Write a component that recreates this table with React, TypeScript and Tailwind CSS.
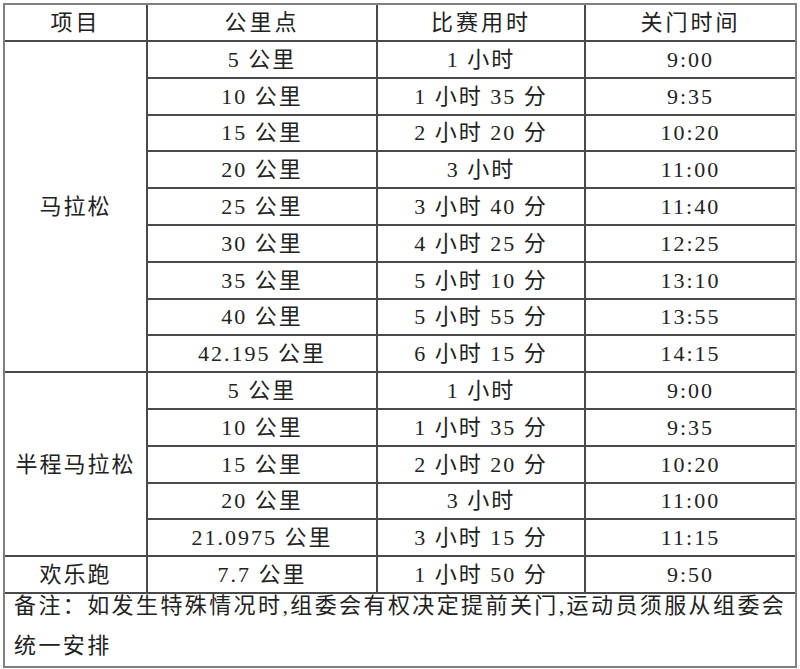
const marathon = [
  ["5 公里", "1 小时", "9:00"],
  ["10 公里", "1 小时 35 分", "9:35"],
  ["15 公里", "2 小时 20 分", "10:20"],
  ["20 公里", "3 小时", "11:00"],
  ["25 公里", "3 小时 40 分", "11:40"],
  ["30 公里", "4 小时 25 分", "12:25"],
  ["35 公里", "5 小时 10 分", "13:10"],
  ["40 公里", "5 小时 55 分", "13:55"],
  ["42.195 公里", "6 小时 15 分", "14:15"],
];

const half = [
  ["5 公里", "1 小时", "9:00"],
  ["10 公里", "1 小时 35 分", "9:35"],
  ["15 公里", "2 小时 20 分", "10:20"],
  ["20 公里", "3 小时", "11:00"],
  ["21.0975 公里", "3 小时 15 分", "11:15"],
];

const cell = "h-[36.8px] p-0 text-center align-middle border-b-2 border-r-2 border-[#4a4a4a]";
const last = "h-[36.8px] p-0 text-center align-middle border-b-2 border-[#4a4a4a]";

function Group({ label, rows }: { label: string; rows: string[][] }) {
  return (
    <>
      {rows.map((r, i) => (
        <tr key={i}>
          {i === 0 && (
            <td rowSpan={rows.length} className={cell}>
              {label}
            </td>
          )}
          <td className={cell}>{r[0]}</td>
          <td className={cell}>{r[1]}</td>
          <td className={last}>{r[2]}</td>
        </tr>
      ))}
    </>
  );
}

export default function App() {
  return (
    <div className="w-[800px] h-[669px] bg-white pt-[3px] pl-[3px] font-['Liberation_Serif','Noto_Sans_CJK_SC',serif] text-[22px] tracking-[2px] text-[#222]">
      <div className="w-[794px] border-2 border-[#808080]">
        <table className="w-full table-fixed border-separate border-spacing-0">
          <colgroup>
            <col className="w-[143px]" />
            <col className="w-[230px]" />
            <col className="w-[208px]" />
            <col className="w-[209px]" />
          </colgroup>
          <tbody>
            <tr className="tracking-[3px]">
              <td className="h-[37px] p-0 text-center align-middle border-b-2 border-r-2 border-[#4a4a4a]">项目</td>
              <td className="h-[37px] p-0 text-center align-middle border-b-2 border-r-2 border-[#4a4a4a]">公里点</td>
              <td className="h-[37px] p-0 text-center align-middle border-b-2 border-r-2 border-[#4a4a4a]">比赛用时</td>
              <td className="h-[37px] p-0 text-center align-middle border-b-2 border-[#4a4a4a]">关门时间</td>
            </tr>
            <Group label="马拉松" rows={marathon} />
            <Group label="半程马拉松" rows={half} />
            <tr>
              <td className={cell}>欢乐跑</td>
              <td className={cell}>7.7 公里</td>
              <td className={cell}>1 小时 50 分</td>
              <td className={last}>9:50</td>
            </tr>
            <tr>
              <td colSpan={4} className="h-[70px] p-0 align-top">
                <div className="-mt-[8px] pl-[9px] leading-[40px] tracking-[2.4px] whitespace-nowrap">
                  备注：如发生特殊情况时,组委会有权决定提前关门,运动员须服从组委会
                  <br />
                  统一安排
                </div>
              </td>
            </tr>
          </tbody>
        </table>
      </div>
    </div>
  );
}
